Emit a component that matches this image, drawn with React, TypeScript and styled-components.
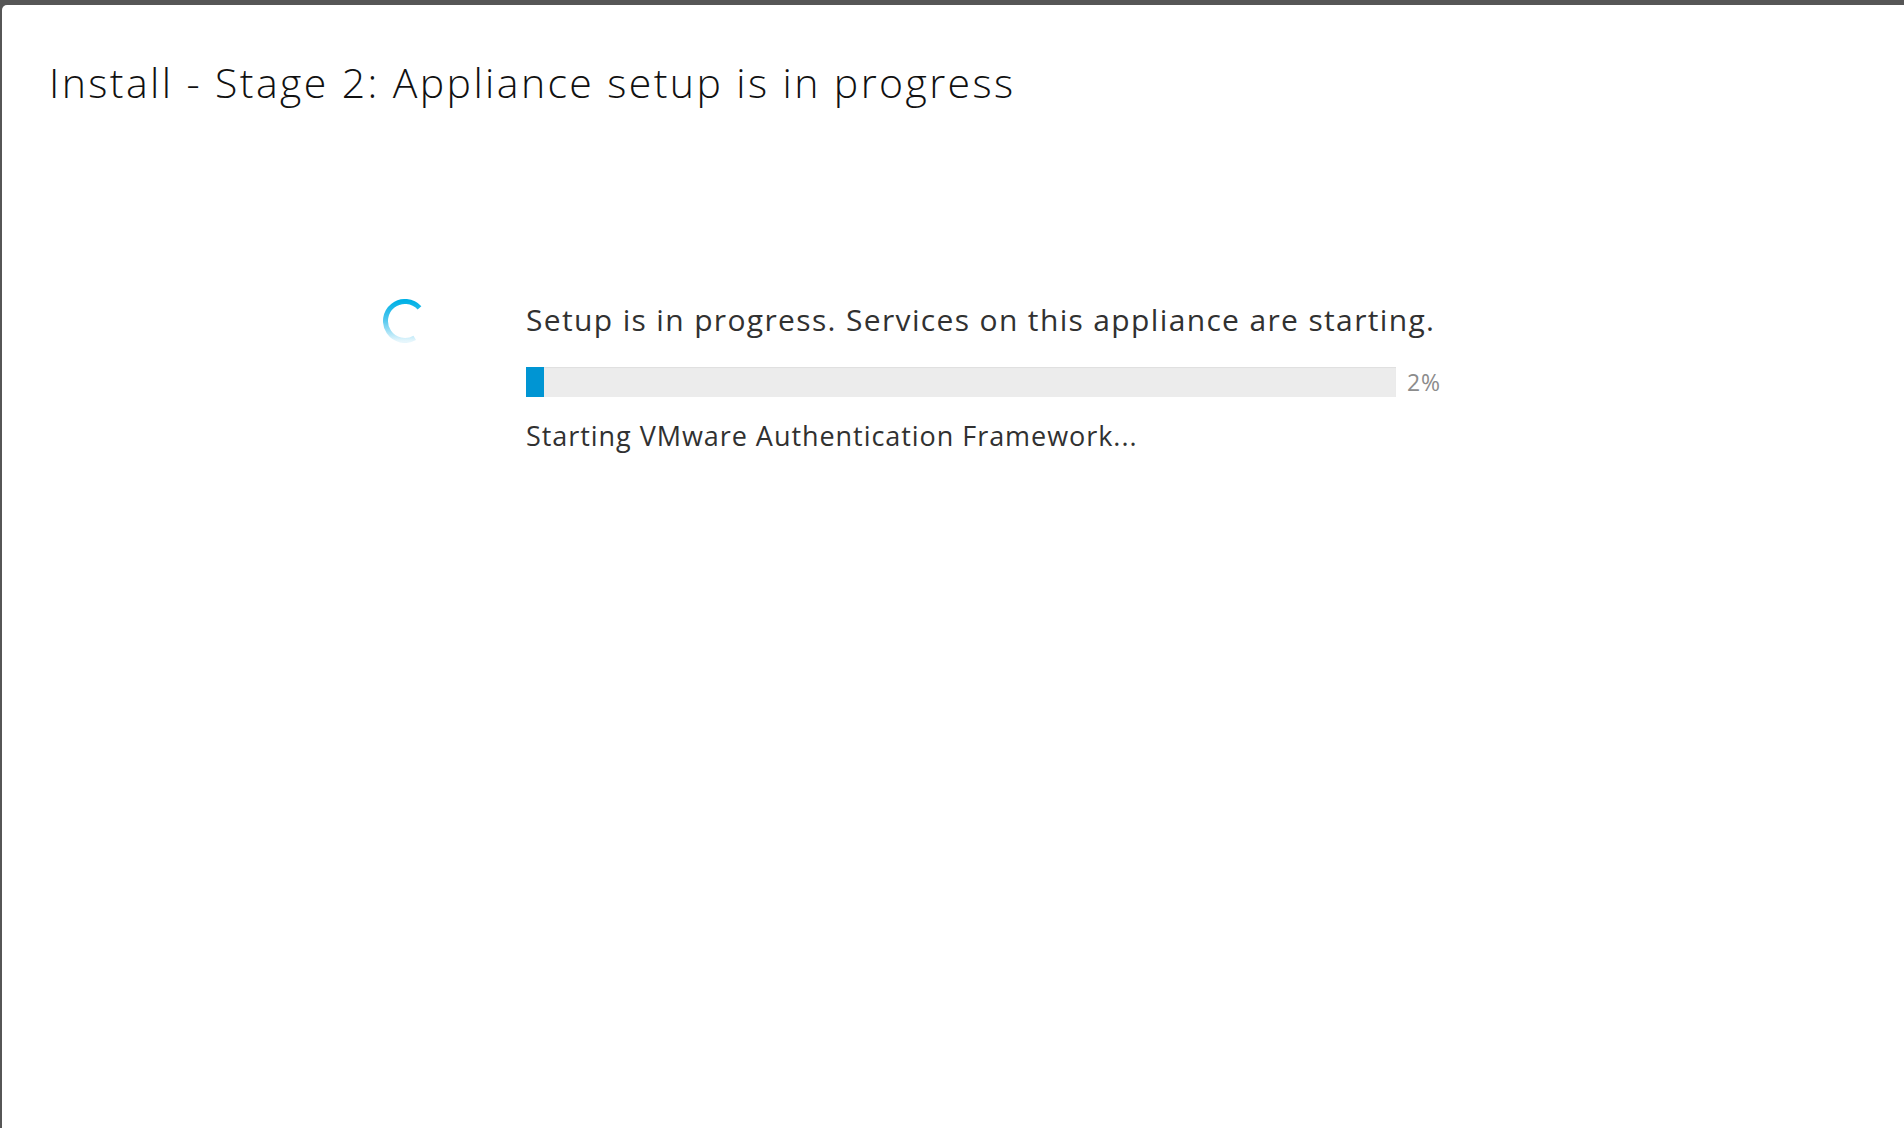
import styled, { createGlobalStyle } from 'styled-components'

const GlobalStyle = createGlobalStyle`
  html, body {
    margin: 0;
    padding: 0;
    height: 100%;
    background: #565656;
    overflow: hidden;
  }
  #root {
    height: 100%;
  }
`

const Backdrop = styled.div`
  height: 100%;
  padding: 5px 0 0 2px;
  box-sizing: border-box;
`

const Modal = styled.div`
  height: 100%;
  background: #ffffff;
  border-top-left-radius: 5px;
  font-family: 'Open Sans', 'Noto Sans', sans-serif;
  display: flex;
  flex-direction: column;
`

const Title = styled.h1`
  margin: 53px 0 0 47px;
  font-size: 41px;
  font-weight: 300;
  line-height: 1.2;
  color: #111;
  letter-spacing: 2.4px;
`

const ProgressSection = styled.div`
  display: flex;
  align-items: flex-start;
  margin-top: 192px;
  padding-left: 381px;
  gap: 99px;
`

const SpinnerBox = styled.div`
  width: 44px;
  height: 44px;
  flex: none;
`

const Details = styled.div`
  display: flex;
  flex-direction: column;
  padding-top: 3px;
`

const Message = styled.div`
  font-size: 30px;
  line-height: 1.2;
  color: #313131;
  letter-spacing: 1.35px;
`

const BarRow = styled.div`
  display: flex;
  align-items: center;
  gap: 11px;
  margin-top: 28px;
`

const Track = styled.div`
  width: 870px;
  height: 30px;
  background: #ececec;
  box-shadow: inset 0 1px 1px rgba(0, 0, 0, 0.06);
  display: flex;
`

const Fill = styled.div`
  height: 100%;
  background: #0095d3;
`

const Percent = styled.span`
  font-size: 23px;
  color: #8c8c8c;
  letter-spacing: 0.8px;
`

const Status = styled.div`
  margin-top: 22px;
  font-size: 27px;
  line-height: 1.2;
  color: #313131;
  letter-spacing: 0.95px;
`

const Spinner = () => {
  const cx = 22
  const cy = 22
  const r = 19.5
  const pt = (deg: number) => {
    const a = ((deg - 90) * Math.PI) / 180
    return `${cx + r * Math.cos(a)} ${cy + r * Math.sin(a)}`
  }
  // arc from ~1:30 counter-clockwise round to ~5 o'clock
  const d = `M ${pt(48)} A ${r} ${r} 0 1 0 ${pt(150)}`
  return (
    <SpinnerBox>
      <svg width="44" height="44" viewBox="0 0 44 44">
        <defs>
          <linearGradient id="spin" gradientUnits="userSpaceOnUse" x1="0" y1="2" x2="0" y2="42">
            <stop offset="0" stopColor="#00b1e6" />
            <stop offset="0.45" stopColor="#4cc6ee" />
            <stop offset="1" stopColor="#e6f6fc" />
          </linearGradient>
        </defs>
        <path d={d} fill="none" stroke="url(#spin)" strokeWidth="5" />
      </svg>
    </SpinnerBox>
  )
}

const App = () => {
  const progress = 2
  return (
    <>
      <GlobalStyle />
      <Backdrop>
        <Modal>
          <Title>Install - Stage 2: Appliance setup is in progress</Title>
          <ProgressSection>
            <Spinner />
            <Details>
              <Message>Setup is in progress. Services on this appliance are starting.</Message>
              <BarRow>
                <Track>
                  <Fill style={{ width: `${progress * 1.03}%` }} />
                </Track>
                <Percent>{progress}%</Percent>
              </BarRow>
              <Status>Starting VMware Authentication Framework...</Status>
            </Details>
          </ProgressSection>
        </Modal>
      </Backdrop>
    </>
  )
}

export default App
